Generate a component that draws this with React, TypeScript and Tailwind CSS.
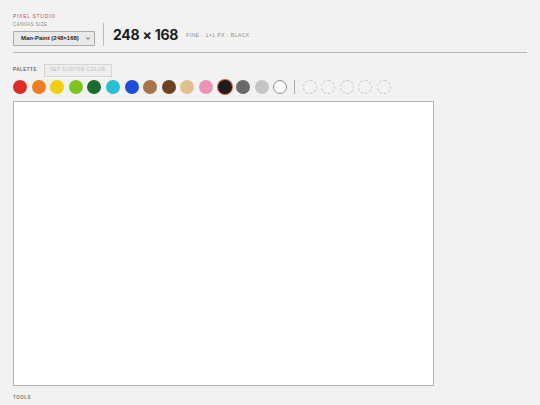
import { useState } from "react";

const palette = [
    "#e12a2a", "#ef7d22", "#f3cf06", "#7cc41e", "#1e6b2e", "#27bfd4", "#1f4fd8",
    "#a8744a", "#6c4322", "#e3c18e", "#ee93b6", "#1c1c1c", "#6a6a6a", "#c5c5c5", "#ffffff",
];

export default function App() {
    const [selected, setSelected] = useState(11);
    const font = { fontFamily: '"Liberation Sans", Arial, sans-serif' };

    return (
        <div className="min-h-[405px] w-[540px] bg-[#f2f2f2] px-[13px] pt-[14px]" style={font}>
            <div className="flex items-end gap-[8px] pb-[6px] border-b border-[#b9b9b9]">
                <div className="flex flex-col">
                    <div className="text-[5px] tracking-[0.14em] text-[#d2454a] leading-none">PIXEL STUDIO</div>
                    <div className="mt-[4px] text-[4.5px] tracking-[0.1em] text-[#8a8a8a] leading-none">CANVAS SIZE</div>
                    <div className="mt-[3px] flex h-[15px] w-[82px] items-center justify-between rounded-[1px] border border-[#a9a9a9] bg-[#e9e9e9] pl-[7px] pr-[4px]">
                        <span className="text-[6px] font-bold text-[#2a2a2a] leading-none">Man-Paint (248×168)</span>
                        <svg width="4" height="3" viewBox="0 0 4 3">
                            <path d="M0.4 0.5 L2 2.3 L3.6 0.5" fill="none" stroke="#333" strokeWidth="0.8" />
                        </svg>
                    </div>
                </div>
                <div className="h-[23px] w-px bg-[#bdbdbd]" />
                <div className="flex items-center gap-[8px] pl-[1px] pb-[4px]">
                    <div className="text-[14px] text-[#1d1d1d] leading-none tracking-[-0.02em]" style={{ fontFamily: 'Inter, "Liberation Sans", sans-serif', fontWeight: 700 }}>
                        248 × 168
                    </div>
                    <div className="pt-[1px] text-[5px] tracking-[0.1em] text-[#8c8c8c] leading-none">FINE · 1×1 PX · BLACK</div>
                </div>
            </div>

            <div className="mt-[11px] flex items-center gap-[7px]">
                <div className="text-[4.5px] font-bold tracking-[0.12em] text-[#666] leading-none">PALETTE</div>
                <button className="h-[13px] w-[68px] border border-[#d5d5d5] bg-[#eeeeee] text-[4.5px] tracking-[0.12em] text-[#b9b9b9] leading-none">
                    SET CUSTOM COLOR
                </button>
            </div>

            <div className="mt-[3px] flex items-center gap-[4.6px]">
                {palette.map((c, i) => (
                    <button
                        key={c}
                        onClick={() => setSelected(i)}
                        className={`h-[14px] w-[14px] shrink-0 rounded-full ${i === selected ? "ring-1 ring-[#e7533f]" : ""} ${c === "#ffffff" ? "border border-[#8e8e8e]" : ""}`}
                        style={{ backgroundColor: c }}
                    />
                ))}
                <div className="mx-[2.5px] h-[14px] w-px bg-[#a8a8a8]" />
                {[0, 1, 2, 3, 4].map((i) => (
                    <div key={i} className="h-[14px] w-[14px] shrink-0 rounded-full border border-dashed border-[#c6c6c6]" />
                ))}
            </div>

            <div className="mt-[7px] h-[285px] w-[421px] border border-[#b3b3b3] bg-white" />

            <div className="mt-[10px] text-[4.5px] font-bold tracking-[0.12em] text-[#7a7a7a] leading-none">TOOLS</div>
        </div>
    );
}
